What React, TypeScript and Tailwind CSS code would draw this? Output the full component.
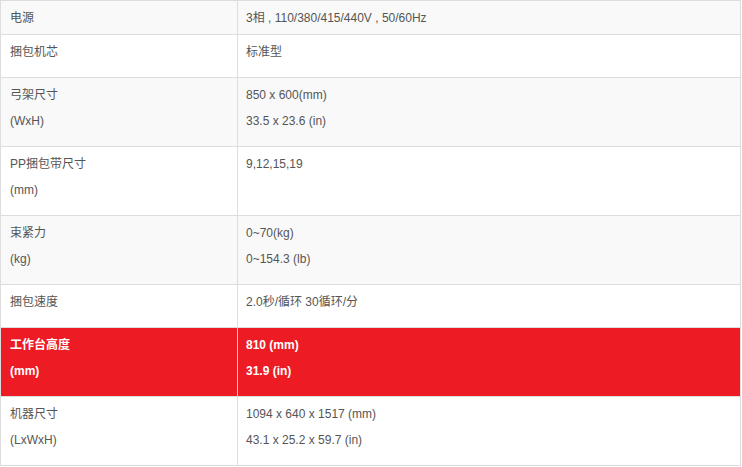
import React from 'react';

type Row = { label: string[]; value: string[]; compact?: boolean; highlight?: boolean };

const rows: Row[] = [
  { label: ['电源'], value: ['3相 , 110/380/415/440V , 50/60Hz'], compact: true },
  { label: ['捆包机芯'], value: ['标准型'] },
  { label: ['弓架尺寸', '(WxH)'], value: ['850 x 600(mm)', '33.5 x 23.6 (in)'] },
  { label: ['PP捆包带尺寸', '(mm)'], value: ['9,12,15,19'] },
  { label: ['束紧力', '(kg)'], value: ['0~70(kg)', '0~154.3 (lb)'] },
  { label: ['捆包速度'], value: ['2.0秒/循环 30循环/分'] },
  { label: ['工作台高度', '(mm)'], value: ['810 (mm)', '31.9 (in)'], highlight: true },
  { label: ['机器尺寸', '(LxWxH)'], value: ['1094 x 640 x 1517 (mm)', '43.1 x 25.2 x 59.7 (in)'] },
];

export default function App() {
  return (
    <div
      className="bg-white w-[742px] h-[467px] text-[12px] leading-[26px] text-[#555]"
      style={{ fontFamily: '"Liberation Sans", Arial, "Noto Sans CJK SC", sans-serif' }}
    >
      <div className="w-[741px] grid grid-cols-[237px_503px] border-t border-l border-[#dddddd]">
        {rows.map((row, i) => {
          const bg = row.highlight
            ? 'bg-[#ed1c24] text-white font-bold'
            : i % 2 === 0
              ? 'bg-[#f9f9f9]'
              : 'bg-white';
          const pad = row.compact ? 'pt-[4px] pb-[3px]' : 'pt-[4px] pb-[12px]';
          // the divider inside the red row is a pale line
          const divider = row.highlight ? 'border-r-[#f6c3c5]' : 'border-r-[#dddddd]';
          const lines = Math.max(row.label.length, row.value.length);
          return (
            <React.Fragment key={i}>
              <div className={`${bg} ${pad} pl-[9px] border-b border-b-[#dddddd] border-r ${divider}`}>
                {Array.from({ length: lines }).map((_, j) => (
                  <p key={j} className="h-[26px] whitespace-nowrap">{row.label[j] ?? ''}</p>
                ))}
              </div>
              <div className={`${bg} ${pad} pl-[8px] border-b border-r border-[#dddddd]`}>
                {Array.from({ length: lines }).map((_, j) => (
                  <p key={j} className="h-[26px] whitespace-nowrap">{row.value[j] ?? ''}</p>
                ))}
              </div>
            </React.Fragment>
          );
        })}
      </div>
    </div>
  );
}
